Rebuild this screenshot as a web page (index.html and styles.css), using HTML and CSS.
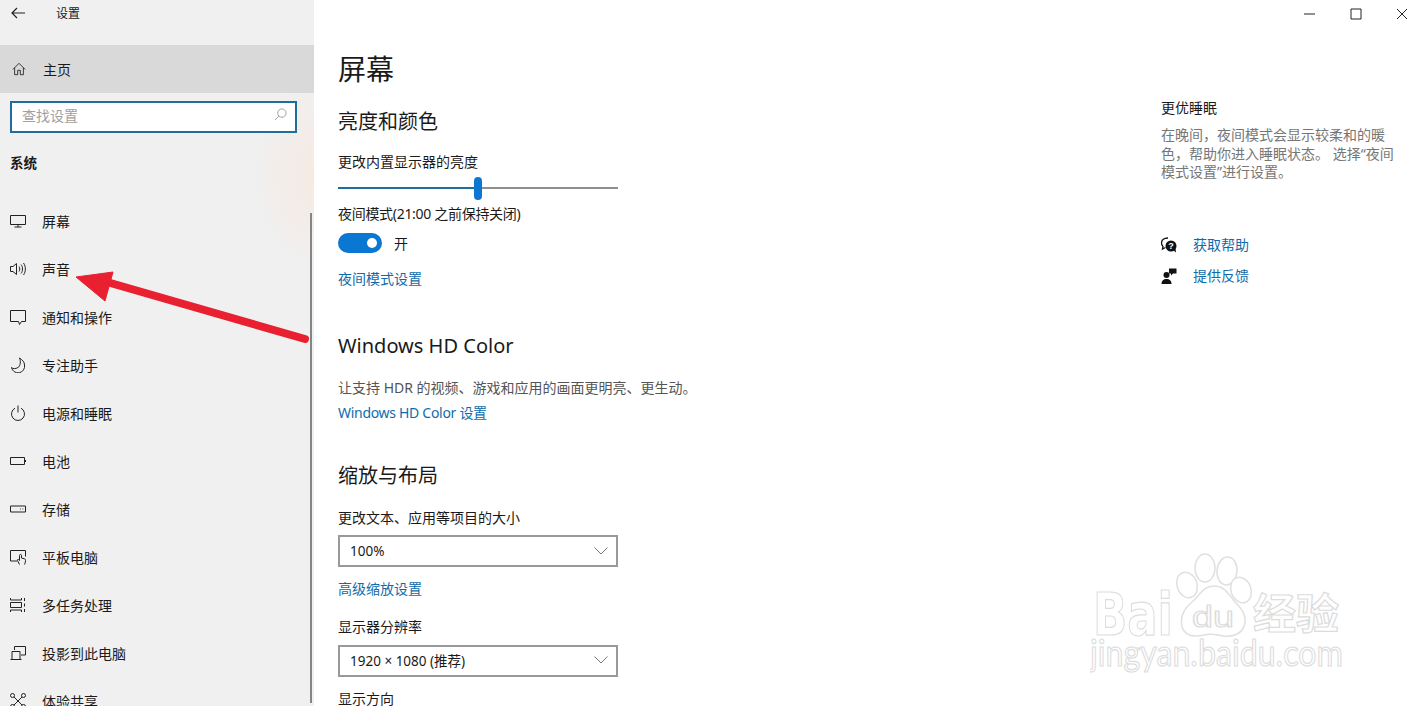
FILE: index.html
```html
<!DOCTYPE html>
<html lang="zh-CN">
<head>
<meta charset="utf-8">
<title>设置</title>
<link rel="stylesheet" href="styles.css">
</head>
<body>
<div class="app">
  <nav class="sidebar">
    <div class="titlebar">
      <svg class="back" viewBox="0 0 14 12"><path d="M6 1 1 6l5 5M1 6h13"/></svg>
      <span>设置</span>
    </div>
    <div class="home">
      <svg class="icon" viewBox="0 0 16 16"><path d="M1 8.500 8 1.500 15 8.500M3 6.500V14.500H6.500V9.500H9.500V14.500H13V6.500"/></svg>
      <span>主页</span>
    </div>
    <div class="search"><span>查找设置</span>
      <svg class="search-icon" viewBox="0 0 14 14"><circle cx="8.500" cy="5.500" r="4.500"/><path d="M5.300 8.700 1 13"/></svg>
    </div>
    <div class="group">系统</div>
    <ul class="menu">
      <li><svg class="icon" viewBox="0 0 16 16"><path d="M.5 2.500h15v9H.5zM8 11.500v2.500M4.500 14h7"/></svg>屏幕</li>
      <li><svg class="icon" viewBox="0 0 16 16"><path d="M.5 5.500h2.500L6.500 2.500v11L3 10.500H.5zM9 5.500c1 1.500 1 3.500 0 5M11 3.500c2 2.500 2 6.500 0 9M13.500 2c2.500 3.500 2.500 8.500 0 12"/></svg>声音</li>
      <li><svg class="icon" viewBox="0 0 16 16"><path d="M.5 1.500h15v11h-4L9.500 15.500 8.500 12.500H.5z"/></svg>通知和操作</li>
      <li><svg class="icon" viewBox="0 0 16 16"><path d="M9.500 1c3 2 5 4 5 7a6.500 6.500 0 0 1-13 2.500c1.500 1.500 4 1.500 6.500 0S11 4 9.500 1z"/></svg>专注助手</li>
      <li><svg class="icon" viewBox="0 0 16 16"><path d="M5 3.200a6.500 6.500 0 1 0 6 0M8 .5v7"/></svg>电源和睡眠</li>
      <li><svg class="icon" viewBox="0 0 16 16"><path d="M.5 4.500h14v7H.5zM15.500 7v2"/></svg>电池</li>
      <li><svg class="icon" viewBox="0 0 16 16"><path d="M.5 5h15v6H.5zM10 8h.8M12.500 8h.8"/></svg>存储</li>
      <li><svg class="icon" viewBox="0 0 16 16"><path d="M7 12H.5V1.500h15v6M9.500 15.500 7.500 11.500C7 10.500 8 10 8.800 10.800L9.500 11.500V6.500c0-1.500 2-1.500 2 0V9l3 .8c1 .3 1 1 1 2 0 1.500-.5 2.700-1 3.700"/></svg>平板电脑</li>
      <li><svg class="icon" viewBox="0 0 16 16"><path d="M.5 1v2M.5 3h11M11.500 1v2M.5 15v-2M.5 13h11M11.500 15v-2M.5 5.500h11v5H.5zM14.500 1v3M14.500 12v3M14.500 6.500v3"/></svg>多任务处理</li>
      <li><svg class="icon" viewBox="0 0 16 16"><path d="M4.500 5V1.500h11V10H11M.5 14.500h11M2 14.500v-8h8v8"/></svg>投影到此电脑</li>
      <li><svg class="icon" viewBox="0 0 16 16"><circle cx="2.500" cy="2.500" r="2"/><circle cx="13.500" cy="2.500" r="2"/><circle cx="2.500" cy="13.500" r="2"/><circle cx="13.500" cy="13.500" r="2"/><path d="m4 4 8 8M12 4l-8 8"/></svg>体验共享</li>
    </ul>
    <div class="scrollbar"></div>
  </nav>

  <main class="content">
    <h1>屏幕</h1>
    <h2 class="brightness-head">亮度和颜色</h2>
    <div class="label brightness-label">更改内置显示器的亮度</div>
    <div class="slider"><div class="slider-fill"></div><div class="slider-thumb"></div><div class="slider-rest"></div></div>
    <div class="label night-label">夜间模式(21:00 之前保持关闭)</div>
    <div class="toggle-row"><div class="toggle"><div class="toggle-knob"></div></div><span>开</span></div>
    <a class="link night-link">夜间模式设置</a>
    <h2 class="hd-head">Windows HD Color</h2>
    <p class="label hd-text">让支持 HDR 的视频、游戏和应用的画面更明亮、更生动。</p>
    <a class="link hd-link">Windows HD Color 设置</a>
    <h2 class="scale-head">缩放与布局</h2>
    <div class="label scale-label">更改文本、应用等项目的大小</div>
    <div class="select scale-select"><span>100%</span><svg class="chev" viewBox="0 0 14 8"><path d="M.5.5 7 7 13.500.5"/></svg></div>
    <a class="link adv-link">高级缩放设置</a>
    <div class="label res-label">显示器分辨率</div>
    <div class="select res-select"><span>1920 × 1080 (推荐)</span><svg class="chev" viewBox="0 0 14 8"><path d="M.5.5 7 7 13.500.5"/></svg></div>
    <div class="label orient-label">显示方向</div>
  </main>

  <aside class="aside">
    <div class="winctl">
      <div class="winbtn"><svg viewBox="0 0 12 12"><path d="M0 6h11"/></svg></div>
      <div class="winbtn"><svg viewBox="0 0 12 12"><path d="M1 1h10v10H1z"/></svg></div>
      <div class="winbtn"><svg viewBox="0 0 12 12"><path d="m1 1 10 10M11 1 1 11"/></svg></div>
    </div>
    <div class="tip-title">更优睡眠</div>
    <p class="tip-text">在晚间，夜间模式会显示较柔和的暖色，帮助你进入睡眠状态。 选择“夜间模式设置”进行设置。</p>
    <div class="help help-first">
      <svg class="help-icon" viewBox="0 0 16 16"><path class="bubble-line" d="M7 1C3 1 .5 3 .5 6c0 1.500.7 2.500 1.500 3.500L1.500 12 4.500 10.500"/><circle class="fill" cx="10" cy="9" r="5.500"/><path class="fill" d="M12 13l3 2.500-.5-4z"/><text class="q" x="10" y="12" text-anchor="middle">?</text></svg>
      <a class="link-plain">获取帮助</a>
    </div>
    <div class="help help-second">
      <svg class="help-icon" viewBox="0 0 16 16"><circle class="fill" cx="5.500" cy="7" r="3"/><path class="fill" d="M.5 16c0-3.500 2-5 5-5s5 1.500 5 5z"/><path class="fill" d="M8 .5h7.500v5H12L10 7.500V5.500H8z"/></svg>
      <a class="link-plain">提供反馈</a>
    </div>
  </aside>
</div>

<svg class="arrow" viewBox="0 0 320 360"><path class="arrow-shaft" d="M100 280 305 339"/><path class="arrow-head" d="M76 277 113 272 105 301z"/></svg>

<svg class="watermark" viewBox="0 0 260 130">
  <g class="wm-paw">
    <ellipse cx="115" cy="15" rx="10" ry="14"/>
    <ellipse cx="137" cy="18" rx="10" ry="14" transform="rotate(5 137 18)"/>
    <ellipse cx="151" cy="37" rx="10" ry="13" transform="rotate(-20 151 37)"/>
    <ellipse cx="97" cy="32" rx="10" ry="13" transform="rotate(-20 97 32)"/>
    <path d="M124 33c11 0 15 9 21 16 6 6 11 12 10 21-2 11-12 14-21 13-7-1-13-3-20-1-9 2-19 2-22-8-2-10 2-18 9-24 9-7 11-17 23-17z"/>
  </g>
  <text class="wm-big" x="3" y="82" textLength="80" lengthAdjust="spacingAndGlyphs">Bai</text>
  <text class="wm-du" x="102" y="74" textLength="42" lengthAdjust="spacingAndGlyphs">du</text>
  <text class="wm-cn" x="163" y="76" textLength="86" lengthAdjust="spacingAndGlyphs">经验</text>
  <text class="wm-url" x="0" y="113" textLength="253" lengthAdjust="spacingAndGlyphs">jingyan.baidu.com</text>
</svg>
</body>
</html>
```

FILE: styles.css
```css
* { box-sizing: border-box; }
html, body { margin: 0; height: 706px; overflow: hidden; background: #fff; }
body {
  font-family: "Noto Sans", "Noto Sans CJK SC", sans-serif;
  font-size: 14px;
  color: #1a1a1a;
  position: relative;
}
h1, h2, p, ul { margin: 0; padding: 0; font-weight: 400; }
.app { display: flex; height: 706px; overflow: hidden; }

/* sidebar */
.sidebar {
  width: 314px;
  flex: none;
  position: relative;
  overflow: hidden;
  background:
    radial-gradient(ellipse 60px 90px at 314px 175px, rgba(250, 228, 215, .55), rgba(250, 228, 215, 0)),
    #f0f0f0;
}
.titlebar { height: 45px; display: flex; padding-top: 4px; align-items: flex-start; font-size: 12px; }
.titlebar span { margin-left: 31px; line-height: 20px; }
.back { width: 14px; height: 12px; margin: 3px 0 0 11px; fill: none; stroke: #222; stroke-width: 1.200; }
.home { height: 48px; background: #d9d9d9; display: flex; align-items: center; padding-left: 12px; }
.home span { margin-left: 17px; }
.icon { width: 16px; height: 16px; flex: none; fill: none; stroke: #222; stroke-width: 1; }
.home .icon { width: 14px; height: 14px; }
.search {
  margin: 8px 17px 0 10px;
  height: 32px;
  border: 2px solid #1f6d9b;
  background: #fff;
  display: flex;
  align-items: center;
  justify-content: space-between;
  padding: 0 8px 5px 10px;
  color: #a0a0a0;
}
.search-icon { width: 13px; height: 13px; fill: none; stroke: #9a9a9a; stroke-width: 1; }
.group { margin: 20px 0 0 10px; font-weight: 700; font-size: 13.500px; line-height: 20px; }
.menu { list-style: none; margin-top: 24px; }
.menu li { height: 48px; display: flex; align-items: center; gap: 16px; padding-left: 10px; }
.scrollbar { position: absolute; left: 310px; top: 213px; width: 2px; height: 490px; background: #858585; }

/* main */
.content { width: 823px; flex: none; padding: 49px 0 0 24px; }
.content h1 { font-size: 28px; line-height: 40px; }
.content h2 { font-size: 20px; line-height: 28px; }
.label { line-height: 20px; }
.link, .link-plain { color: #0f6cab; display: block; line-height: 20px; }
.brightness-head { margin-top: 19px; }
.brightness-label { margin-top: 16px; }
.slider { margin-top: 4px; width: 280px; height: 24px; display: flex; align-items: center; }
.slider-fill { width: 136px; height: 2px; background: #1f6d9b; }
.slider-thumb { width: 8px; height: 23px; border-radius: 4px; background: #0a78d2; }
.slider-rest { flex: 1; height: 2px; background: #8f8f8f; }
.night-label { margin-top: 4px; letter-spacing: -.3px; }
.toggle-row { margin-top: 9px; height: 20px; display: flex; align-items: center; gap: 12px; }
.toggle { width: 44px; height: 20px; border-radius: 10px; background: #0a78d2; display: flex; align-items: center; justify-content: flex-end; padding-right: 5px; }
.toggle-knob { width: 10px; height: 10px; border-radius: 50%; background: #fff; }
.night-link { margin-top: 16px; }
.hd-head { margin-top: 43px; }
.hd-text { margin-top: 18px; color: #555; }
.hd-link { margin-top: 5px; letter-spacing: -.3px; }
.scale-head { margin-top: 39px; }
.scale-label { margin-top: 18px; }
.select {
  width: 280px;
  height: 32px;
  border: 2px solid #999;
  display: flex;
  align-items: center;
  justify-content: space-between;
  padding: 0 8px 0 10px;
  font-size: 13.500px;
}
.scale-select { margin-top: 7px; }
.chev { width: 14px; height: 8px; fill: none; stroke: #777; stroke-width: 1; }
.adv-link { margin-top: 12px; }
.res-label { margin-top: 18px; }
.res-select { margin-top: 8px; padding-bottom: 2px; }
.orient-label { margin-top: 12px; }

/* aside */
.aside { flex: 1; min-width: 0; padding-left: 24px; }
.winctl { display: flex; justify-content: flex-end; height: 28px; margin-right: -5px; }
.winbtn { width: 46px; height: 28px; display: flex; align-items: center; justify-content: center; }
.winbtn svg { width: 12px; height: 12px; fill: none; stroke: #222; stroke-width: 1; }
.tip-title { margin-top: 70px; line-height: 20px; }
.tip-text { margin-top: 8px; width: 236px; line-height: 18.500px; color: #767676; }
.help { display: flex; align-items: center; gap: 16px; height: 20px; }
.help-first { margin-top: 53px; }
.help-second { margin-top: 11px; }
.help-icon { width: 16px; height: 16px; flex: none; }
.fill { fill: #111; }
.bubble-line { fill: none; stroke: #111; stroke-width: 1.300; }
.q { fill: #fff; font-size: 9px; font-weight: 700; font-family: "Liberation Sans", sans-serif; }

/* overlays */
.arrow { position: absolute; left: 0; top: 0; width: 320px; height: 360px; pointer-events: none; }
.arrow-shaft { fill: none; stroke: #e8202f; stroke-width: 8; stroke-linecap: round; }
.arrow-head { fill: #e8202f; stroke: #e8202f; stroke-width: 1; stroke-linejoin: round; }
.watermark { position: absolute; left: 1090px; top: 553px; width: 260px; height: 130px; pointer-events: none; }
.wm-paw { fill: #fff; stroke: #e0e0e0; stroke-width: 1.500; }
.watermark text { fill: #fff; stroke: #dcdcdc; stroke-width: 1.200; }
.wm-big { font-family: "DejaVu Sans", sans-serif; font-weight: 700; font-size: 58px; }
.wm-du { font-family: "Liberation Sans", sans-serif; font-size: 30px; }
.wm-cn { font-family: "Noto Sans CJK SC", sans-serif; font-weight: 700; font-size: 42px; }
.wm-url { font-family: "Lato", sans-serif; font-size: 37px; }
```
